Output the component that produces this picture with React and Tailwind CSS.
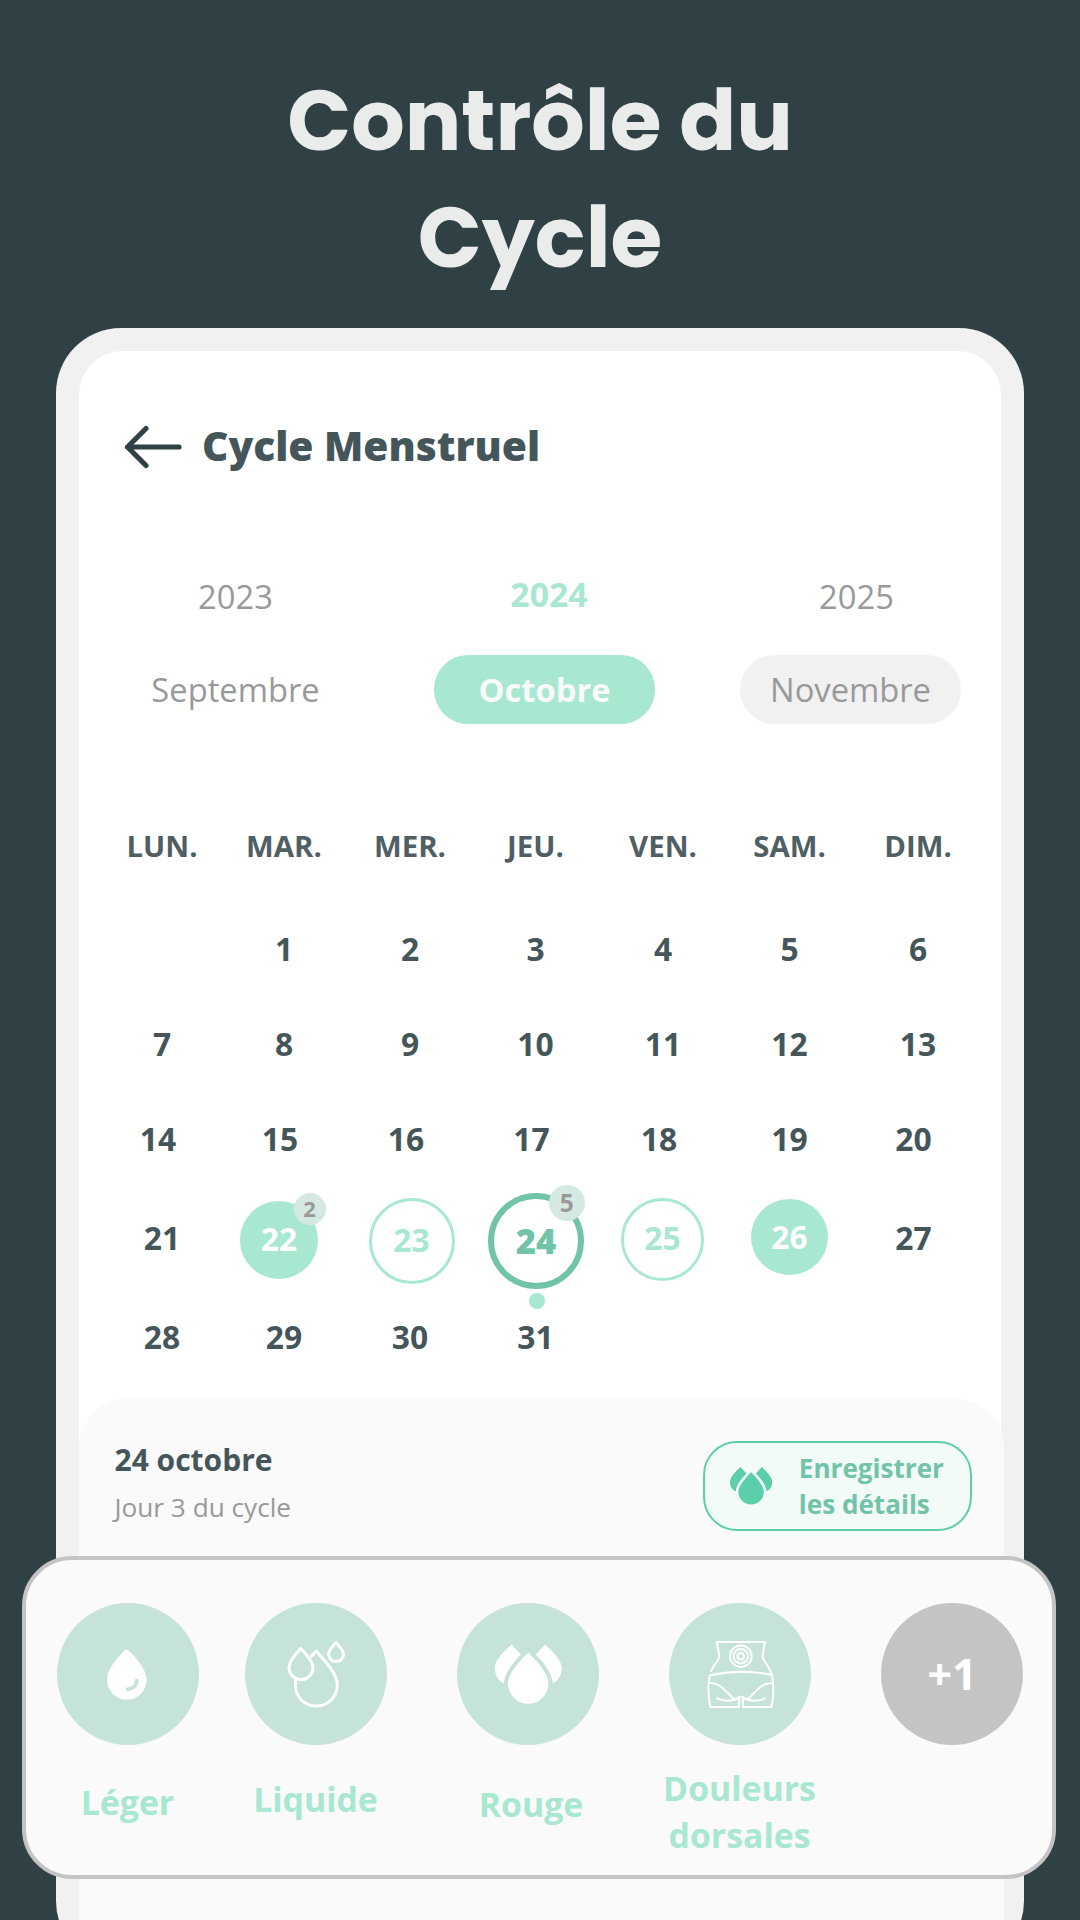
const WEEKDAYS = ["LUN.", "MAR.", "MER.", "JEU.", "VEN.", "SAM.", "DIM."];

const COLS = "grid grid-cols-[122px_122px_130px_121px_134px_119px_138px]";

const CELL = "flex items-center justify-center";

function Row({ height, children }) {
  return <div className={`${COLS} ${height} text-[31.8px] font-bold leading-none text-[#45565a]`}>{children}</div>;
}

function Day({ n, shift = "" }) {
  return <div className={`${CELL} ${shift}`}>{n}</div>;
}

function TripleDrop({ className, viewBox }) {
  return (
    <svg className={className} viewBox={viewBox} fill="currentColor">
      <path d="M43.3 23C36.2 30 23 43.500 23 54A20.200 20.200 0 0 0 63.400 54C63.400 43.500 50.300 30 43.300 23Z" />
      <path d="M26.500 14.800L35.800 25C28 33.500 19.500 43 18.800 53.800C13 51 9.800 45 9.800 39C9.800 31 17.500 23 26.500 14.800Z" />
      <path d="M60.100 14.800L50.800 25C58.600 33.500 67.100 43 67.800 53.800C73.600 51 76.800 45 76.800 39C76.800 31 69.100 23 60.100 14.800Z" />
    </svg>
  );
}

function SingleDrop() {
  return (
    <svg className="size-[90px]" viewBox="0 0 90 90">
      <path
        fill="#fff"
        d="M41.800 21.500Q43.700 19.700 45.600 21.500C53 28.500 63.600 40 63.600 51A19.800 19.800 0 0 1 24 51C24 40 34.400 28.500 41.800 21.500Z"
      />
      <path d="M53.700 51.600C53.700 56.500 50 60 44.800 60.300" fill="none" stroke="#c6e3d9" strokeWidth="3.900" strokeLinecap="round" />
    </svg>
  );
}

function OutlineDrops() {
  return (
    <svg className="size-[90px]" viewBox="1 -0.6 90 90" fill="none" stroke="#fff" strokeWidth="3" strokeLinejoin="round">
      <path d="M40.500 27.500L46.300 21.500C54 30 67.300 44 67.300 55.500A21 21 0 0 1 25.300 55.500C25.300 53 25.600 51 26 49.500" />
      <path d="M30.800 18.800C26 24 19 31.500 19 38A12 12 0 0 0 43 38C43 31.500 35.500 24 30.800 18.800Z" />
      <path d="M66 12.800C63 16.500 58.600 21 58.600 24.500A7.500 7.500 0 0 0 73.600 24.500C73.600 21 69 16.500 66 12.800Z" />
    </svg>
  );
}

function BackPain() {
  return (
    <svg className="size-[90px]" viewBox="0 -0.6 90 90" fill="none" stroke="#fff" strokeWidth="2" strokeLinejoin="round" strokeLinecap="round">
      <path d="M16 41.500C18 36.500 22 32.500 24 28.500C25 26 22.500 18 21.800 12.300H70C69.300 18 66.800 26 67.800 28.500C69.800 32.500 76 40 77 46" />
      <path d="M77 46C79 55 78.500 67 76.500 77.300H47.800V69.500M44 69.500V77.300H15.300C13.300 67 12.800 54 14.800 45.800Q46 38.500 77 45.500" />
      <path d="M14 53.500C26 52.500 31 63 39.200 69.500M77.800 53.500C65.800 52.500 60.800 63 52.600 69.500" />
      <path d="M22 68.800C28 72 38.500 71.800 43 68.300Q45.900 65.500 48.800 68.300C53.300 71.800 63.800 72 69.800 68.800" />
      <circle cx="45.800" cy="26.600" r="10.800" />
      <circle cx="45.800" cy="26.600" r="7.200" />
      <circle cx="45.800" cy="26.600" r="3.300" />
    </svg>
  );
}

function Symptom({ label, gap, icon, labelClass }) {
  return (
    <div className={`flex w-[142px] shrink-0 flex-col items-center ${gap}`}>
      <div className="flex size-[142px] shrink-0 items-center justify-center rounded-full bg-[#c6e3d9] text-white">{icon}</div>
      <p className={`text-center text-[33.800px] leading-[47.300px] font-bold whitespace-pre text-[#a8e7d0] ${labelClass}`}>{label}</p>
    </div>
  );
}

export default function App() {
  return (
    <div className="relative h-[1920px] w-[1080px] overflow-hidden bg-[#304146] font-['Open_Sans',sans-serif]">
      <h1 className="h-[328px] pt-[62px] text-center font-['Poppins','Inter',sans-serif] text-[84px] leading-[117px] font-bold text-[#eaeceb]">
        Contrôle du
        <br />
        Cycle
      </h1>

      <main className="ml-[56px] h-[1638px] w-[967.5px] rounded-[65px] bg-[#f1f1f1] pt-[23px] pl-[23px]">
        <div className="h-[1592px] w-[922px] rounded-[44px] bg-white pt-[66px]">
          <header className="flex h-[60px] items-center gap-[20px] pl-[45px]">
            <svg className="h-[44px] w-[58px]" viewBox="0 0 58 44" fill="none" stroke="#304146" strokeWidth="5.200" strokeLinecap="round" strokeLinejoin="round">
              <path d="M22 3.500L3.500 22L22 40.500M3.500 22H55" />
            </svg>
            <h2 className="pb-[3px] text-[40.700px] leading-none font-extrabold text-[#45565a]">Cycle Menstruel</h2>
          </header>

          <div className="mt-[96px] flex h-[46px] items-center pl-[46px] text-[32.700px] leading-none text-[#999999]">
            <div className="w-[221px] pt-[2px] text-center">2023</div>
            <div className="ml-[88px] w-[221px] pb-[2px] pl-[9px] text-center text-[33.800px] font-bold text-[#a8e7d0]">2024</div>
            <div className="ml-[85px] w-[221px] pt-[2px] pl-[12px] text-center">2025</div>
          </div>

          <div className="mt-[36px] flex h-[68.5px] pl-[46px] text-[32.700px] leading-none text-[#999999]">
            <div className={`${CELL} w-[221px] pt-[2px]`}>Septembre</div>
            <div className={`${CELL} ml-[88px] w-[221px] rounded-[34px] bg-[#a8e7d0] pt-[2px] font-bold text-[#fafafa]`}>Octobre</div>
            <div className={`${CELL} ml-[85px] w-[221px] rounded-[34px] bg-[#f1f1f1] pt-[2px]`}>Novembre</div>
          </div>

          <div className="mt-[103px] pl-[22px]">
            <div className={`${COLS} h-[40px] text-[29.400px] leading-none font-bold text-[#4f5f63]`}>
              {WEEKDAYS.map((d) => (
                <div key={d} className={CELL}>
                  {d}
                </div>
              ))}
            </div>

            <div className="mt-[35.5px]">
              <Row height="h-[94.5px]">
                <div />
                {[1, 2, 3, 4, 5, 6].map((n) => (
                  <Day key={n} n={n} />
                ))}
              </Row>
              <Row height="h-[95.5px]">
                {[7, 8, 9, 10, 11, 12, 13].map((n) => (
                  <Day key={n} n={n} />
                ))}
              </Row>
              <Row height="h-[95px]">
                {[14, 15, 16, 17, 18].map((n) => (
                  <Day key={n} n={n} shift="pr-[8px] pb-[1px]" />
                ))}
                <Day n={19} shift="pb-[1px]" />
                <Day n={20} shift="pr-[9px] pb-[1px]" />
              </Row>
              <Row height="h-[102px]">
                <Day n={21} />
                <div className={`${CELL} pt-[3px] pr-[10px]`}>
                  <div className={`${CELL} relative size-[78px] rounded-full bg-[#a8e7d0] pb-[1px] text-white`}>
                    22
                    <span className={`${CELL} absolute -top-[7.5px] left-[53.5px] size-[32px] rounded-full bg-[#d5e9e2] pb-[2px] text-[22px] text-[#999999]`}>2</span>
                  </div>
                </div>
                <div className={`${CELL} pt-[5px] pl-[3px]`}>
                  <div className={`${CELL} size-[86px] shrink-0 rounded-full border-[3px] border-[#a8e7d0] pb-[1px] text-[#a8e7d0]`}>23</div>
                </div>
                <div className={`${CELL} pt-[6px] pl-[1px]`}>
                  <div className={`${CELL} relative size-[96px] shrink-0 rounded-full border-[6px] border-[#72c4a8] text-[34.500px] font-extrabold text-[#72c4a8]`}>
                    24
                    <span className={`${CELL} absolute -top-[14px] left-[55px] size-[35.5px] rounded-full bg-[#d5e9e2] text-[24.500px] font-bold text-[#999999]`}>5</span>
                    <span className="absolute top-[94px] left-[35px] size-[16px] rounded-full bg-[#a8e7d0]" />
                  </div>
                </div>
                <div className={`${CELL} pt-[2px] pr-[1px]`}>
                  <div className={`${CELL} size-[83px] shrink-0 rounded-full border-[3px] border-[#a8e7d0] pb-[2px] text-[#a8e7d0]`}>25</div>
                </div>
                <div className={`${CELL} pb-[2px]`}>
                  <div className={`${CELL} size-[76.5px] shrink-0 rounded-full bg-[#a8e7d0] text-white`}>26</div>
                </div>
                <Day n={27} shift="pr-[9px]" />
              </Row>
              <Row height="h-[95px]">
                {[28, 29, 30, 31].map((n) => (
                  <Day key={n} n={n} shift="pt-[1px]" />
                ))}
              </Row>
            </div>
          </div>

          <section className="mt-[14px] flex h-[565px] w-[925px] items-start justify-between rounded-[50px] bg-[#fafafa] pt-[42px] pr-[32px] pl-[35.5px]">
            <div>
              <h3 className="text-[30px] leading-[40px] font-bold text-[#45565a]">24 octobre</h3>
              <p className="mt-[9px] text-[26.200px] leading-[36px] text-[#999999]">Jour 3 du cycle</p>
            </div>
            <button className="mt-[1px] flex h-[90px] w-[269px] items-center gap-[26.5px] rounded-[34px] border-2 border-[#5bcfa9] bg-[#f2fbf8] pl-[25px] text-left text-[26.100px] leading-[36px] font-bold whitespace-nowrap text-[#72c4a8]">
              <TripleDrop className="h-[37.5px] w-[42.300px] shrink-0 text-[#5bcfa9]" viewBox="9.8 14.8 67 59.4" />
              <span>
                Enregistrer
                <br />
                les détails
              </span>
            </button>
          </section>
        </div>
      </main>

      {/* Symptom sheet floating over the bottom of the phone */}
      <section className="absolute top-[1556px] left-[21.5px] flex h-[323px] w-[1034px] items-start rounded-[50px] border-4 border-[#c4c4c4] bg-[#fafafa] pt-[43px] pl-[31px]">
        <Symptom label="Léger" gap="" labelClass="mt-[33.500px]" icon={<SingleDrop />} />
        <Symptom label="Liquide" gap="ml-[46.5px]" labelClass="mt-[31px] pr-[1px]" icon={<OutlineDrops />} />
        <Symptom label="Rouge" gap="ml-[70px]" labelClass="mt-[35.500px] pl-[6px]" icon={<TripleDrop className="size-[90px]" viewBox="-2 -0.6 90 90" />} />
        <Symptom label={"Douleurs\ndorsales"} gap="ml-[70px]" labelClass="mt-[19.500px] pr-[1px]" icon={<BackPain />} />
        <div className={`${CELL} ml-[70px] size-[142px] shrink-0 rounded-full bg-[#c4c4c4] text-[43.500px] leading-none font-bold text-white`}>+1</div>
      </section>
    </div>
  );
}
